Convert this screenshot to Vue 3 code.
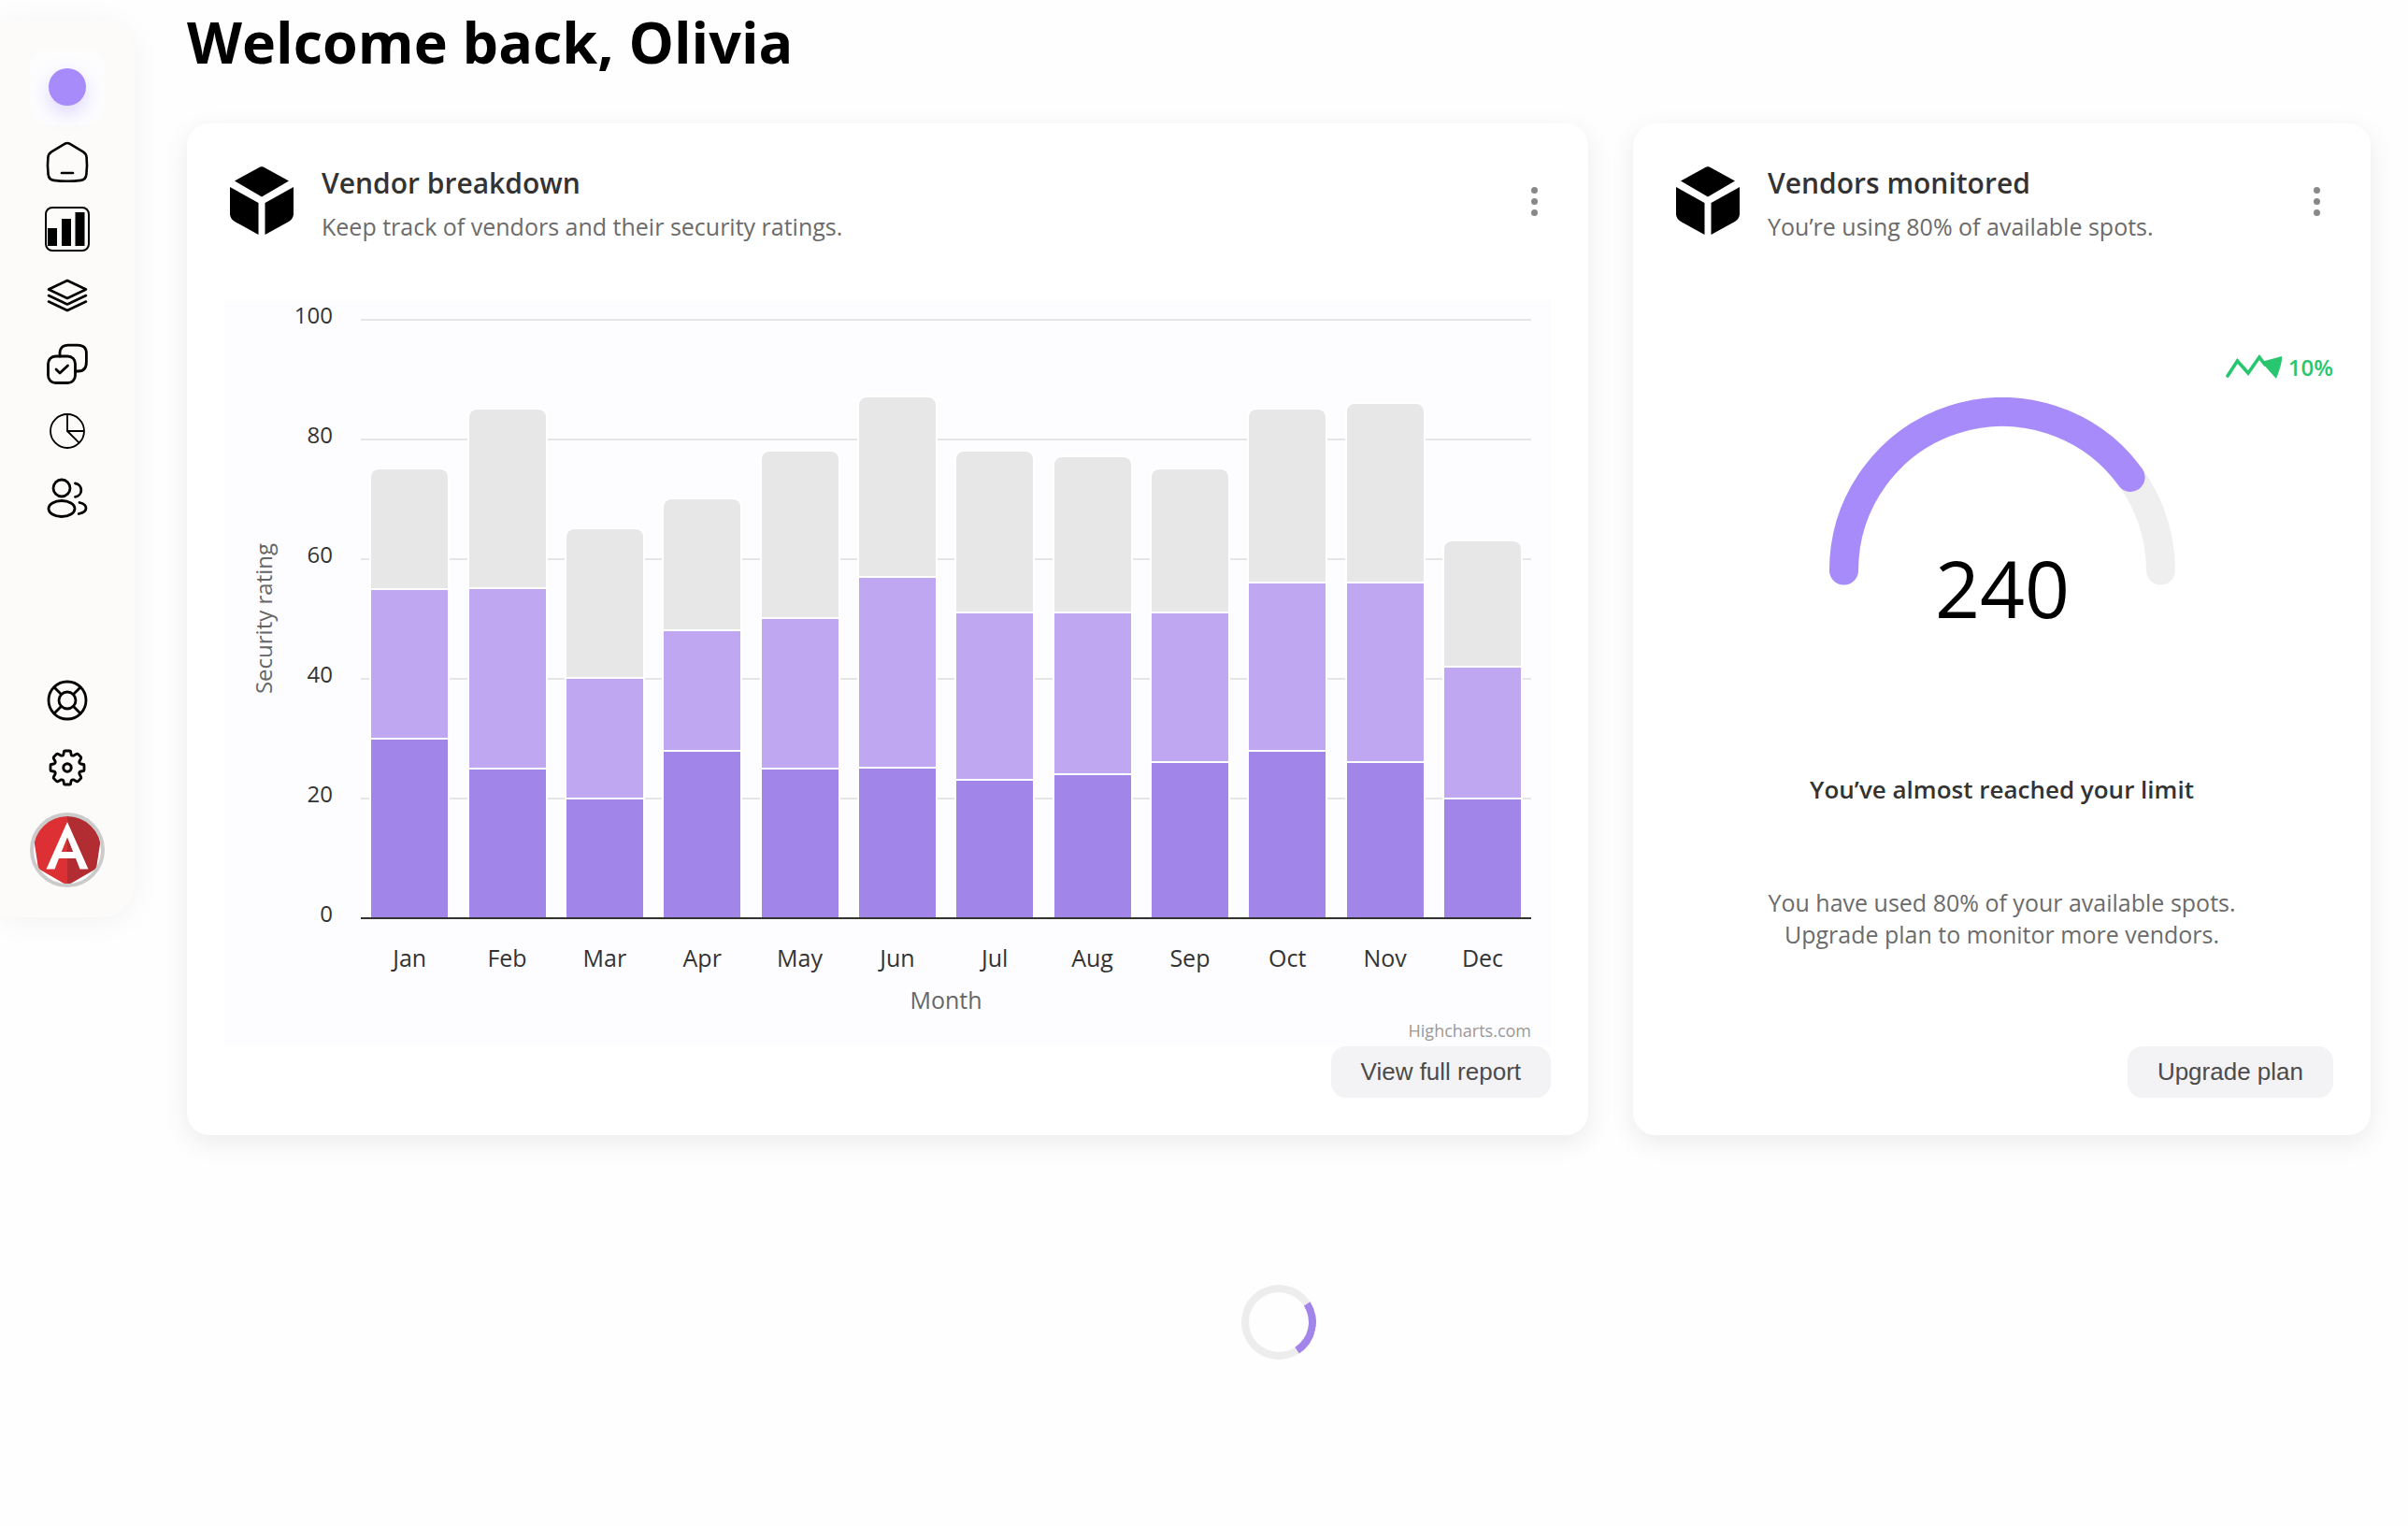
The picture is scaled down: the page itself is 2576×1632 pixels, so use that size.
<script setup>
const months = [
  { name: 'Jan', values: [20, 25, 30] },
  { name: 'Feb', values: [30, 30, 25] },
  { name: 'Mar', values: [25, 20, 20] },
  { name: 'Apr', values: [22, 20, 28] },
  { name: 'May', values: [28, 25, 25] },
  { name: 'Jun', values: [30, 32, 25] },
  { name: 'Jul', values: [27, 28, 23] },
  { name: 'Aug', values: [26, 27, 24] },
  { name: 'Sep', values: [24, 25, 26] },
  { name: 'Oct', values: [29, 28, 28] },
  { name: 'Nov', values: [30, 30, 26] },
  { name: 'Dec', values: [21, 22, 20] }
]
const ticks = [100, 80, 60, 40, 20, 0]
</script>

<template>
  <div class="page">
    <nav class="sidebar" aria-label="Main">
      <a href="#" class="brand" aria-label="Brand"><span class="brand-dot"></span></a>
      <div class="links">
        <a href="#" aria-label="Home">
          <svg viewBox="0 0 48 48" fill="none" stroke="#000" stroke-width="2.6" stroke-linecap="round" stroke-linejoin="round">
            <path d="M21.6 4.7Q24 3.2 26.4 4.7L41 13.4Q44.4 15.6 44.6 19.5Q45.6 28 44.4 37.5Q43.7 43.3 38.5 43.9Q24 45.6 9.5 43.9Q4.3 43.3 3.6 37.5Q2.4 28 3.4 19.5Q3.6 15.6 7 13.4Z" />
            <path d="M18 36h12" />
          </svg>
        </a>
        <a href="#" aria-label="Reports">
          <svg viewBox="0 0 48 48">
            <rect x="1" y="1" width="46" height="46" rx="7" fill="none" stroke="#000" stroke-width="2" />
            <path d="M3 23h10v19H3zM18 13h10v29H18zM32.5 6h10v36H32.5z" />
          </svg>
        </a>
        <a href="#" aria-label="Layers">
          <svg viewBox="0 0 48 48" fill="none" stroke="#000" stroke-width="2.6" stroke-linejoin="round" stroke-linecap="round">
            <path d="M24 7L44 16.500L24 26L4 16.500Z" />
            <path d="M4 23L24 32.500L44 23M4 29.500L24 39L44 29.500" />
          </svg>
        </a>
        <a href="#" aria-label="Tasks">
          <svg viewBox="0 0 48 48" fill="none" stroke="#000" stroke-width="2.8" stroke-linecap="round" stroke-linejoin="round">
            <rect x="3.500" y="16" width="29" height="28.500" rx="8" />
            <path d="M16 16V13Q16 4.200 25 4.200H35Q44.400 4.200 44.400 13V22Q44.400 32 36 32H32.500" />
            <path d="M12 30L16 34L24.500 26" />
          </svg>
        </a>
        <a href="#" aria-label="Breakdown">
          <svg viewBox="0 0 48 48" fill="none" stroke="#000" stroke-width="1.8">
            <circle cx="24" cy="24" r="18" />
            <path d="M24 6V24H42M24 24L36.700 36.700" />
          </svg>
        </a>
        <a href="#" aria-label="Users">
          <svg viewBox="0 0 48 48" fill="none" stroke="#000" stroke-width="2.8" stroke-linecap="round">
            <circle cx="18" cy="13" r="9" />
            <ellipse cx="18" cy="35" rx="14" ry="8.500" />
            <path d="M32.500 8A7.200 7.200 0 0 1 32.500 22.300M37 28.500Q44 30 44 34.500Q44 39 36.200 40.500" />
          </svg>
        </a>
      </div>
      <div class="links lower">
        <a href="#" aria-label="Support">
          <svg viewBox="0 0 48 48" fill="none" stroke="#000" stroke-width="2.8">
            <circle cx="24" cy="24" r="20" />
            <circle cx="24" cy="24" r="9" />
            <path d="M10 10L17.700 17.700M38 10L30.300 17.700M10 38L17.700 30.300M38 38L30.300 30.300" />
          </svg>
        </a>
        <a href="#" aria-label="Settings">
          <svg viewBox="0 0 48 48" fill="none" stroke="#000" stroke-width="2.8" stroke-linejoin="round">
            <circle cx="24" cy="24" r="4.200" stroke-width="3" />
            <path d="M20.500 6.600Q20.500 6 21.500 6H26.500Q27.500 6 27.500 6.600L28 9.500Q28.300 11.400 30.500 11.200L34 9.300Q34.900 8.900 35.500 9.500L38.500 12.500Q39.100 13.100 38.700 14L36.800 17.500Q36.600 19.700 38.500 20L41.400 20.500Q42 20.500 42 21.500V26.500Q42 27.500 41.400 27.500L38.500 28Q36.600 28.300 36.800 30.500L38.700 34Q39.100 34.900 38.500 35.500L35.500 38.500Q34.900 39.100 34 38.700L30.500 36.800Q28.300 36.600 28 38.500L27.500 41.400Q27.500 42 26.500 42H21.500Q20.500 42 20.500 41.400L20 38.500Q19.700 36.600 17.500 36.800L14 38.700Q13.100 39.100 12.500 38.500L9.500 35.500Q8.900 34.900 9.300 34L11.200 30.500Q11.400 28.300 9.500 28L6.600 27.500Q6 27.500 6 26.500V21.500Q6 20.500 6.600 20.500L9.500 20Q11.400 19.700 11.200 17.500L9.300 14Q8.900 13.100 9.500 12.500L12.500 9.500Q13.100 8.900 14 9.300L17.500 11.200Q19.700 11.400 20 9.500Z" />
          </svg>
        </a>
        <a href="#" class="avatar" aria-label="Profile">
          <svg viewBox="0 0 80 80">
            <defs><clipPath id="avatar-clip"><circle cx="40" cy="40" r="36.500" /></clipPath></defs>
            <circle cx="40" cy="40" r="38" fill="#fff" />
            <g clip-path="url(#avatar-clip)">
              <path d="M40 0L2 14L9 60L40 78Z" fill="#dd3035" />
              <path d="M40 0L78 14L71 60L40 78Z" fill="#b12d31" />
            </g>
            <path d="M40 10L17.500 60.500H26.500L31 49H49L53.500 60.500H62.500ZM40 26.500L46.200 42H33.800Z" fill="#fff" fill-rule="evenodd" />
            <circle cx="40" cy="40" r="38" fill="none" stroke="#cbcbcb" stroke-width="4" />
          </svg>
        </a>
      </div>
    </nav>

    <main class="main">
      <h1>Welcome back, Olivia</h1>
      <div class="cards">
        <section class="card">
          <header class="card-head">
            <svg class="cube" viewBox="0 0 80 80">
              <path d="M36.500 3.500Q40 1 43.500 3.500L69 17.500L40 34.500L11 17.500Z" />
              <path d="M6 24L36.500 41V75L12 61.500Q6 58 6 53Z" />
              <path d="M74 24L43.500 41V75L68 61.500Q74 58 74 53Z" />
            </svg>
            <div class="heading">
              <h2>Vendor breakdown</h2>
              <p>Keep track of vendors and their security ratings.</p>
            </div>
            <button class="more" aria-label="More options"><i></i><i></i><i></i></button>
          </header>
          <div class="chart">
            <div class="axis-title"><span>Security rating</span></div>
            <div class="y-labels"><span v-for="t in ticks" :key="t">{{ t }}</span></div>
            <div class="plot">
              <div class="grid"><i v-for="t in ticks" :key="t"></i></div>
              <div class="bars">
                <div v-for="m in months" :key="m.name" class="slot">
                  <div class="bar" :style="{ height: m.values[0] + m.values[1] + m.values[2] + '%' }">
                    <div v-for="(v, i) in m.values" :key="i" :class="['seg', 'seg-' + i]" :style="{ flexGrow: v }"></div>
                  </div>
                </div>
              </div>
            </div>
            <div class="x-labels"><span v-for="m in months" :key="m.name">{{ m.name }}</span></div>
            <div class="x-title">Month</div>
            <a class="credit" href="#">Highcharts.com</a>
          </div>
          <button class="action">View full report</button>
        </section>

        <section class="card">
          <header class="card-head">
            <svg class="cube" viewBox="0 0 80 80">
              <path d="M36.500 3.500Q40 1 43.500 3.500L69 17.500L40 34.500L11 17.500Z" />
              <path d="M6 24L36.500 41V75L12 61.500Q6 58 6 53Z" />
              <path d="M74 24L43.500 41V75L68 61.500Q74 58 74 53Z" />
            </svg>
            <div class="heading">
              <h2>Vendors monitored</h2>
              <p>You’re using 80% of available spots.</p>
            </div>
            <button class="more" aria-label="More options"><i></i><i></i><i></i></button>
          </header>
          <div class="trend">
            <svg viewBox="0 0 62 28" width="62" height="28">
              <path d="M2 23L12.500 7L24 20L36 3L42 11" fill="none" stroke="#28c76f" stroke-width="3.6" stroke-linecap="round" />
              <path d="M38 8L60 2Q61 8 54 26Z" fill="#28c76f" />
            </svg>
            <span>10%</span>
          </div>
          <svg class="gauge" viewBox="0 0 370 270">
            <path d="M15.500 185A169.500 169.500 0 0 1 354.500 185" stroke="#efefef" />
            <path d="M15.500 185A169.500 169.500 0 0 1 322.100 85.400" stroke="#a78bfa" />
            <text x="185" y="236" text-anchor="middle">240</text>
          </svg>
          <h3>You’ve almost reached your limit</h3>
          <p class="note">You have used 80% of your available spots.<br />Upgrade plan to monitor more vendors.</p>
          <button class="action">Upgrade plan</button>
        </section>
      </div>
      <div class="spinner" role="status" aria-label="Loading"></div>
    </main>
  </div>
</template>

<style>
body {
  background: #fefefe;
}
</style>

<style scoped>
* {
  box-sizing: border-box;
}
h1, h2, h3, p {
  margin: 0;
}
.page {
  display: flex;
  align-items: flex-start;
  gap: 56px;
  font-family: "Open Sans", "Noto Sans", sans-serif;
  font-size: 25px;
  line-height: 34px;
  color: #333;
}
.sidebar {
  flex: none;
  display: flex;
  flex-direction: column;
  align-items: center;
  margin-top: 21px;
  padding: 32px;
  border-radius: 0 36px 36px 0;
  background: #fcfbf9;
  box-shadow: 0 4px 32px rgba(0, 0, 0, 0.05);
}
.brand {
  display: flex;
  align-items: center;
  justify-content: center;
  width: 80px;
  height: 80px;
  margin-bottom: 16px;
  border-radius: 20px;
  background: #fdfdfe;
}
.brand-dot {
  width: 40px;
  height: 40px;
  border-radius: 50%;
  background: #a78bfa;
  box-shadow: 0 8px 20px rgba(167, 139, 250, 0.35);
}
.links {
  display: flex;
  flex-direction: column;
  align-items: center;
  gap: 24px;
}
.links a {
  display: block;
  width: 48px;
  height: 48px;
}
.links .avatar {
  width: 80px;
  height: 80px;
}
.links svg {
  display: block;
}
.lower {
  margin-top: 168px;
}
.main {
  flex: 1;
  display: flex;
  flex-direction: column;
  padding-right: 40px;
}
h1 {
  margin-bottom: 42px;
  font-size: 61px;
  font-weight: 700;
  line-height: 90px;
  color: #000;
}
.cards {
  display: grid;
  grid-template-columns: 19fr 10fr;
  gap: 48px;
}
.card {
  display: flex;
  flex-direction: column;
  padding: 40px;
  border-radius: 24px;
  background: #fff;
  box-shadow: 0 8px 28px rgba(0, 0, 0, 0.08);
}
.card-head {
  display: flex;
  align-items: center;
  height: 87px;
}
.cube {
  flex: none;
  width: 80px;
  height: 80px;
}
.heading {
  flex: 1;
  display: flex;
  flex-direction: column;
  gap: 4px;
  margin-left: 24px;
  padding-top: 4px;
}
h2 {
  font-size: 30px;
  font-weight: 600;
  line-height: 44px;
}
.heading p {
  line-height: 40px;
  color: #6b6b6b;
}
.more {
  display: flex;
  flex-direction: column;
  align-items: center;
  gap: 5px;
  width: 36px;
  padding: 8px 0;
  border: 0;
  background: none;
}
.more i {
  width: 7px;
  height: 7px;
  border-radius: 50%;
  background: #888;
}
.chart {
  display: grid;
  grid-template-columns: 84px 32px 1fr;
  margin-top: 62px;
  padding: 21px 21px 4px 0;
  background: #fdfdff;
}
.axis-title {
  display: flex;
  align-items: center;
  justify-content: center;
  font-size: 24px;
  color: #666;
}
.axis-title span {
  writing-mode: vertical-rl;
  transform: rotate(180deg);
}
.y-labels {
  display: flex;
  flex-direction: column;
  align-items: flex-end;
  justify-content: space-between;
  margin: -22px 0 -12px;
  font-size: 24px;
}
.plot {
  position: relative;
  height: 640px;
  margin-left: 30px;
}
.grid {
  position: absolute;
  inset: -1px 0;
  display: flex;
  flex-direction: column;
  justify-content: space-between;
}
.grid i {
  height: 2px;
  background: #e6e6e6;
}
.grid i:last-child {
  background: #333;
}
.bars {
  position: absolute;
  inset: -2px 0 1px;
  display: flex;
}
.slot {
  flex: 1;
  display: flex;
  align-items: flex-end;
  justify-content: center;
}
.bar {
  display: flex;
  flex-direction: column;
  width: 86px;
  border-radius: 10px 10px 0 0;
  background: #fff;
}
.seg {
  flex-basis: 0;
  border: 2px solid #fff;
  border-bottom: 0;
}
.seg-0 {
  border-radius: 10px 10px 0 0;
  background: #e7e7e7;
}
.seg-1 {
  background: #bfa7f1;
}
.seg-2 {
  background: #a185e8;
}
.x-labels {
  grid-column: 3;
  display: flex;
  margin: 25px 0 0 30px;
}
.x-labels span {
  flex: 1;
  text-align: center;
}
.x-title {
  grid-column: 3;
  margin: 11px 0 0 30px;
  text-align: center;
  color: #666;
}
.credit {
  grid-column: 3;
  justify-self: end;
  margin-top: 3px;
  font-size: 18px;
  line-height: 26px;
  color: #999;
  text-decoration: none;
}
.action {
  align-self: flex-end;
  height: 55px;
  margin-top: auto;
  padding: 0 32px;
  border: 0;
  border-radius: 16px;
  background: #f3f3f6;
  font-family: "Liberation Sans", Arial, sans-serif;
  font-size: 26px;
  color: #4b4b4b;
}
.trend {
  display: flex;
  align-items: center;
  align-self: flex-end;
  gap: 5px;
  margin-top: 117px;
  font-weight: 600;
  font-size: 24px;
  color: #28c76f;
}
.gauge {
  align-self: center;
  width: 370px;
  height: 270px;
  margin-top: 15px;
}
.gauge path {
  fill: none;
  stroke-width: 31px;
  stroke-linecap: round;
}
.gauge text {
  font-size: 84px;
  fill: #000;
}
h3 {
  margin-top: 131px;
  font-size: 26px;
  font-weight: 600;
  line-height: 36px;
  text-align: center;
}
.note {
  margin-top: 86px;
  text-align: center;
  color: #6b6b6b;
}
.spinner {
  align-self: center;
  width: 80px;
  height: 80px;
  margin-top: 160px;
  border: 8px solid #ededed;
  border-right-color: #a185e8;
  border-radius: 50%;
  transform: rotate(12deg);
}
</style>
